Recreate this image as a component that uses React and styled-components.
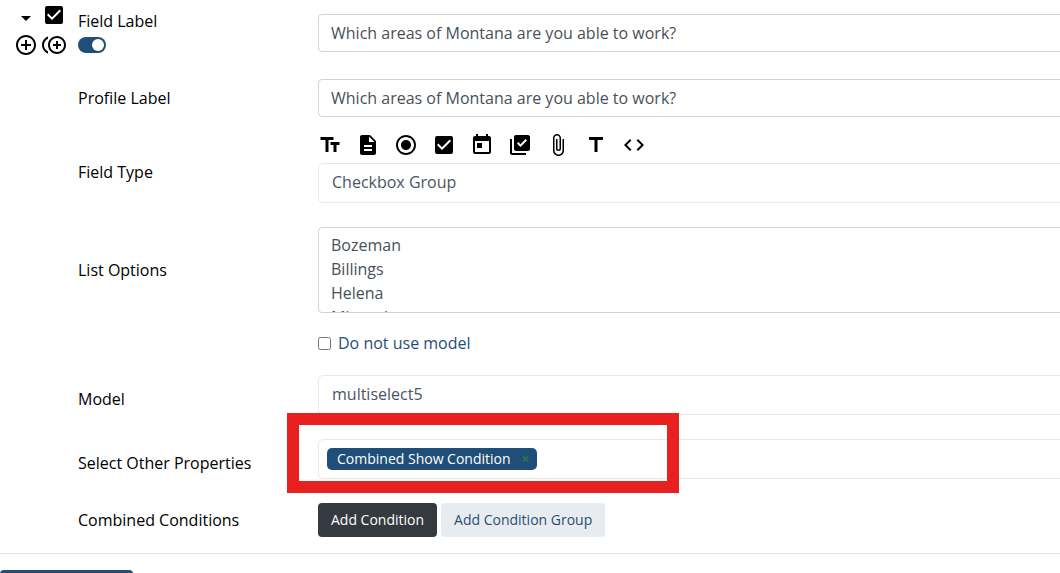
import React, { useState } from 'react';
import styled, { createGlobalStyle } from 'styled-components';
import {
  MdArrowDropDown,
  MdAttachFile,
  MdCheckBox,
  MdCode,
  MdControlPoint,
  MdControlPointDuplicate,
  MdDescription,
  MdLibraryAddCheck,
  MdRadioButtonChecked,
  MdTextFields,
  MdTitle,
  MdToday,
} from 'react-icons/md';

const GlobalStyle = createGlobalStyle`
  *, *::before, *::after {
    box-sizing: border-box;
  }

  body {
    margin: 0;
    background: #fff;
    color: #000;
    font-family: 'Open Sans', 'Noto Sans', sans-serif;
    font-size: 16px;
    line-height: 24px;
    overflow: hidden;
  }

  button, input, textarea {
    font: inherit;
  }
`;

const Form = styled.form`
  display: flex;
  flex-direction: column;
  gap: 16px;
`;

const Row = styled.div`
  display: grid;
  grid-template-columns: 78px 240px 1fr;
  align-items: center;
`;

const FirstRow = styled(Row)`
  align-items: start;
  padding-bottom: 6px;
`;

const Label = styled.label`
  grid-column: 2;
`;

const Name = styled.div`
  grid-column: 2;
`;

const Cell = styled.div`
  grid-column: 3;
  position: relative;
  min-width: 0;
  padding-bottom: ${props => props.$bottom || 0}px;
  /* fields run on past the right edge of the panel */
  margin-right: -16px;
`;

const FirstCell = styled(Cell)`
  padding-top: 14px;
`;

const Tools = styled.div`
  display: grid;
  grid-template-columns: 24px 24px;
  grid-template-rows: 27px 24px;
  column-gap: 4px;
  row-gap: 3px;
  padding: 3px 0 0 14px;
`;

const IconButton = styled.button`
  display: flex;
  align-self: ${props => props.$align || 'start'};
  padding: 0;
  border: 0;
  background: none;
  color: #000;
  font-size: 24px;
  cursor: pointer;
`;

const IconCheck = styled.label`
  display: grid;
  width: 24px;
  height: 24px;
  font-size: 24px;

  input, svg {
    grid-area: 1 / 1;
    margin: 0;
  }

  input {
    opacity: 0;
  }
`;

const LabelStack = styled.div`
  display: flex;
  flex-direction: column;
  align-items: flex-start;
  gap: 4px;
  padding-top: 9px;
`;

const Switch = styled.input`
  appearance: none;
  display: flex;
  align-items: center;
  justify-content: ${props => (props.checked ? 'flex-end' : 'flex-start')};
  width: 28px;
  height: 16px;
  margin: 0;
  padding: 2px;
  border-radius: 8px;
  background: ${props => (props.checked ? '#1f4e79' : '#adb5bd')};

  &::before {
    content: '';
    width: 12px;
    height: 12px;
    border-radius: 50%;
    background: #fff;
  }
`;

const Field = styled.input`
  display: block;
  width: 100%;
  height: 38px;
  padding: 6px 12px;
  border: 1px solid #ced4da;
  border-radius: 4px;
  background: #fff;
  color: #495057;
`;

const SoftField = styled(Field)`
  height: 40px;
  padding: 6px 13px 8px;
  border-color: #e8e8e8;
  border-radius: 5px;
  color: #4a5568;
`;

const Options = styled.textarea`
  display: block;
  width: 100%;
  height: 86px;
  padding: 5px 12px;
  border: 1px solid #ced4da;
  border-radius: 4px;
  color: #495057;
  line-height: 24px;
  resize: none;
  overflow: hidden;
`;

const TypeBar = styled.div`
  display: flex;
  gap: 14px;
  margin-bottom: 6px;
`;

const CheckLine = styled.label`
  display: flex;
  align-items: center;
  gap: 7px;
  padding: 2px 0 4px;
  color: #1f4e79;

  input {
    width: 13px;
    height: 13px;
    margin: 0;
  }
`;

const TagBox = styled.div`
  display: flex;
  align-items: center;
  height: 40px;
  padding: 0 8px;
  border: 1px solid #e8e8e8;
  border-radius: 5px;
`;

const Tag = styled.span`
  display: flex;
  align-items: center;
  height: 22px;
  padding: 0 6px 0 10px;
  border-radius: 5px;
  background: #1f4e79;
  color: #fff;
  font-size: 14px;
`;

const TagRemove = styled.button`
  width: 10px;
  margin-left: 10px;
  padding: 0;
  border: 0;
  background: none;
  color: #28794a;
  font-size: 14px;
  font-weight: 700;
  line-height: 22px;
`;

const Highlight = styled.div`
  position: absolute;
  top: -26px;
  left: -31px;
  width: 392px;
  height: 80px;
  border: 12px solid #e8201f;
  pointer-events: none;
`;

const Buttons = styled.div`
  display: flex;
  gap: 4px;
`;

const Button = styled.button`
  height: 34px;
  padding: 0 13px;
  border: 0;
  border-radius: 4px;
  background: ${props => (props.$dark ? '#343a40' : '#e9ecef')};
  color: ${props => (props.$dark ? '#fff' : '#1f4e79')};
  font-size: 14px;
  white-space: nowrap;
`;

const Footer = styled.div`
  padding-top: 16px;
  border-top: 1px solid #e3e3e3;
`;

const FooterButton = styled.button`
  display: block;
  width: 133px;
  height: 38px;
  border: 0;
  border-radius: 4px;
  background: #1f4e79;
`;

const fieldTypes = [
  { id: 'text', Icon: MdTextFields },
  { id: 'document', Icon: MdDescription },
  { id: 'radio', Icon: MdRadioButtonChecked },
  { id: 'checkbox', Icon: MdCheckBox },
  { id: 'date', Icon: MdToday },
  { id: 'group', Icon: MdLibraryAddCheck },
  { id: 'file', Icon: MdAttachFile },
  { id: 'title', Icon: MdTitle },
  { id: 'code', Icon: MdCode },
];

const question = 'Which areas of Montana are you able to work?';

const App = () => {
  const [enabled, setEnabled] = useState(true);

  return (
    <>
      <GlobalStyle />
      <Form onSubmit={e => e.preventDefault()}>
        <FirstRow>
          <Tools>
            <IconButton type="button" $align="end"><MdArrowDropDown /></IconButton>
            <IconCheck>
              <input type="checkbox" defaultChecked />
              <MdCheckBox />
            </IconCheck>
            <IconButton type="button"><MdControlPoint /></IconButton>
            <IconButton type="button"><MdControlPointDuplicate /></IconButton>
          </Tools>
          <LabelStack>
            <label htmlFor="field-label">Field Label</label>
            <Switch
              type="checkbox"
              role="switch"
              checked={enabled}
              onChange={e => setEnabled(e.target.checked)}
            />
          </LabelStack>
          <FirstCell>
            <Field id="field-label" defaultValue={question} />
          </FirstCell>
        </FirstRow>

        <Row>
          <Label htmlFor="profile-label">Profile Label</Label>
          <Cell>
            <Field id="profile-label" defaultValue={question} />
          </Cell>
        </Row>

        <Row>
          <Label htmlFor="field-type">Field Type</Label>
          <Cell $bottom={8}>
            <TypeBar>
              {fieldTypes.map(({ id, Icon }) => (
                <IconButton key={id} type="button"><Icon /></IconButton>
              ))}
            </TypeBar>
            <SoftField id="field-type" defaultValue="Checkbox Group" />
          </Cell>
        </Row>

        <Row>
          <Label htmlFor="list-options">List Options</Label>
          <Cell>
            <Options id="list-options" defaultValue={'Bozeman\nBillings\nHelena\nMissoula'} />
          </Cell>
        </Row>

        <Row>
          <Cell>
            <CheckLine>
              <input type="checkbox" />
              Do not use model
            </CheckLine>
          </Cell>
        </Row>

        <Row>
          <Label htmlFor="model">Model</Label>
          <Cell $bottom={8}>
            <SoftField id="model" defaultValue="multiselect5" />
          </Cell>
        </Row>

        <Row>
          <Name>Select Other Properties</Name>
          <Cell $bottom={8}>
            <TagBox>
              <Tag>
                Combined Show Condition
                <TagRemove type="button">×</TagRemove>
              </Tag>
            </TagBox>
            <Highlight />
          </Cell>
        </Row>

        <Row>
          <Name>Combined Conditions</Name>
          <Cell>
            <Buttons>
              <Button type="button" $dark>Add Condition</Button>
              <Button type="button">Add Condition Group</Button>
            </Buttons>
          </Cell>
        </Row>

        <Footer>
          <FooterButton type="button" />
        </Footer>
      </Form>
    </>
  );
};

export default App;
